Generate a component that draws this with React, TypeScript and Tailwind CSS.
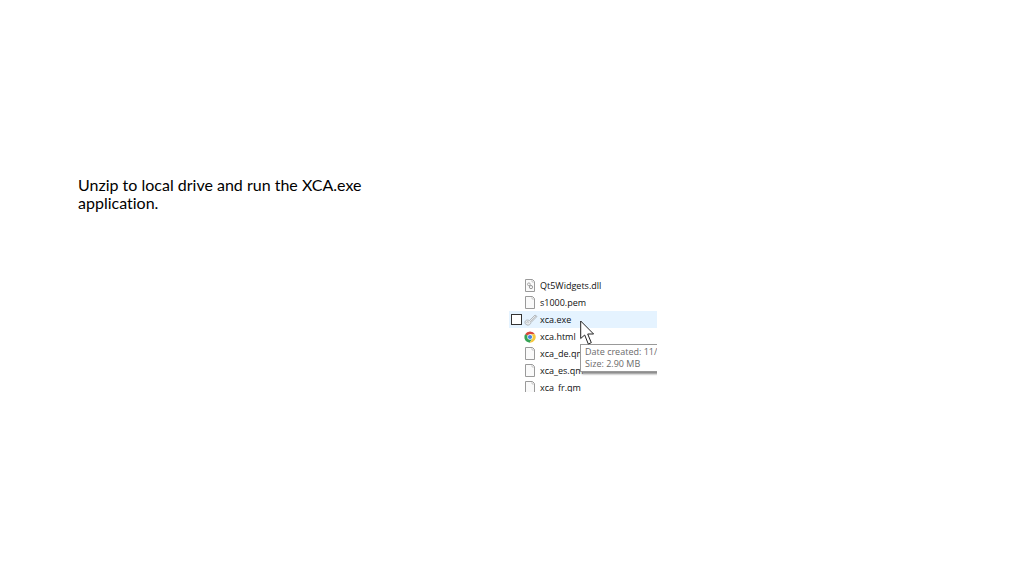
import type { ReactNode } from "react";

type FileKind = "dll" | "file" | "exe" | "html";

const files: { name: string; kind: FileKind }[] = [
  { name: "Qt5Widgets.dll", kind: "dll" },
  { name: "s1000.pem", kind: "file" },
  { name: "xca.exe", kind: "exe" },
  { name: "xca.html", kind: "html" },
  { name: "xca_de.qm", kind: "file" },
  { name: "xca_es.qm", kind: "file" },
  { name: "xca_fr.qm", kind: "file" },
];

const Page = ({ children }: { children?: ReactNode }) => (
  <svg viewBox="0 0 12 14" className="w-3 h-3.5" fill="none">
    <path d="M1.5 0.5H8.5L10.5 2.5V12.5H1.5Z" fill="#fafafa" stroke="#9a9a9a" />
    <path d="M8 1V3H10.5" stroke="#b5b5b5" strokeWidth="0.7" />
    {children}
  </svg>
);

const FileIcon = ({ kind }: { kind: FileKind }) => {
  if (kind === "dll") {
    return (
      <Page>
        <circle cx="4.9" cy="5.3" r="1.4" stroke="#a8a8a8" />
        <circle cx="7" cy="8.1" r="1.6" stroke="#989898" />
      </Page>
    );
  }
  if (kind === "exe") {
    return (
      <svg viewBox="0 0 14 14" className="w-3.5 h-3.5 -mr-0.5" fill="none">
        <path
          d="M1 10.5C0.5 8.5 1.5 7 3.5 7C4.5 7 5 7.5 5.5 7.5L11 2L13 3.5L7 9.5C6.5 11.5 5 12.5 3 12Z"
          fill="#e6eaed"
          stroke="#a6abb0"
          strokeWidth="0.8"
        />
        <path d="M2.5 10L3.5 8.5L5 9.5M6 9L12 3" stroke="#b4b8bb" strokeWidth="0.8" />
      </svg>
    );
  }
  if (kind === "html") {
    return (
      <svg viewBox="0 0 12 12" className="w-3 h-3">
        <path d="M6 6L1.1 3.2A5.7 5.7 0 0 1 11 3.3H6Z" fill="#d9483b" />
        <path d="M6 6L1.1 3.2A5.7 5.7 0 0 0 5.7 11.7L8.3 7.4Z" fill="#35a355" />
        <path d="M6 6V3.3H11A5.7 5.7 0 0 1 5.7 11.7L8.3 7.4Z" fill="#f6c83d" />
        <circle cx="6" cy="6" r="2.7" fill="#fff" />
        <circle cx="6" cy="6" r="2.1" fill="#4384df" />
      </svg>
    );
  }
  return <Page />;
};

const FileRow = ({ name, kind }: { name: string; kind: FileKind }) => {
  const hovered = kind === "exe";

  return (
    <li className={`flex items-center h-[17px] pl-0.5 ${hovered ? "bg-[#e5f3ff]" : ""}`}>
      <span className="flex w-[13px] shrink-0">
        {hovered && (
          <input
            type="checkbox"
            aria-label={name}
            className="appearance-none w-[11px] h-[11px] border border-[#333] bg-white"
          />
        )}
      </span>
      <span className="flex w-4 shrink-0">
        <FileIcon kind={kind} />
      </span>
      <span className="whitespace-nowrap">{name}</span>
    </li>
  );
};

const Tooltip = () => (
  <div
    role="tooltip"
    className="absolute left-[71px] top-[67px] w-24 pl-1 py-px border border-[#999] bg-white leading-3 text-[#6b6b6b] whitespace-nowrap shadow-[2px_2px_2px_#888]"
  >
    <p>Date created: 11/</p>
    <p>Size: 2.90 MB</p>
  </div>
);

const Cursor = () => (
  <svg viewBox="0 0 15 26" className="absolute left-[71px] top-[43px] w-[15px] h-[26px]">
    <path
      d="M0.7 1V18.5L4.7 15L8.3 24L11.3 22.7L7.7 14H13.6Z"
      fill="#fff"
      stroke="#222"
      strokeWidth="1"
    />
  </svg>
);

const App = () => (
  <main className="min-h-screen bg-white grid grid-cols-2 items-start pl-[78px] pr-[84px] text-black">
    <p className="mt-44 max-w-[290px] font-['Lato',sans-serif] text-base leading-[18px] [font-variant-ligatures:none]">
      Unzip to local drive and run the XCA.exe application.
    </p>

    <section className="relative mt-[277px] w-[148px] h-[115px] overflow-hidden font-['Open_Sans',sans-serif] text-[9px] leading-4 text-[#111]">
      <ul>
        {files.map((file) => (
          <FileRow key={file.name} {...file} />
        ))}
      </ul>
      <Tooltip />
      <Cursor />
    </section>
  </main>
);

export default App;
